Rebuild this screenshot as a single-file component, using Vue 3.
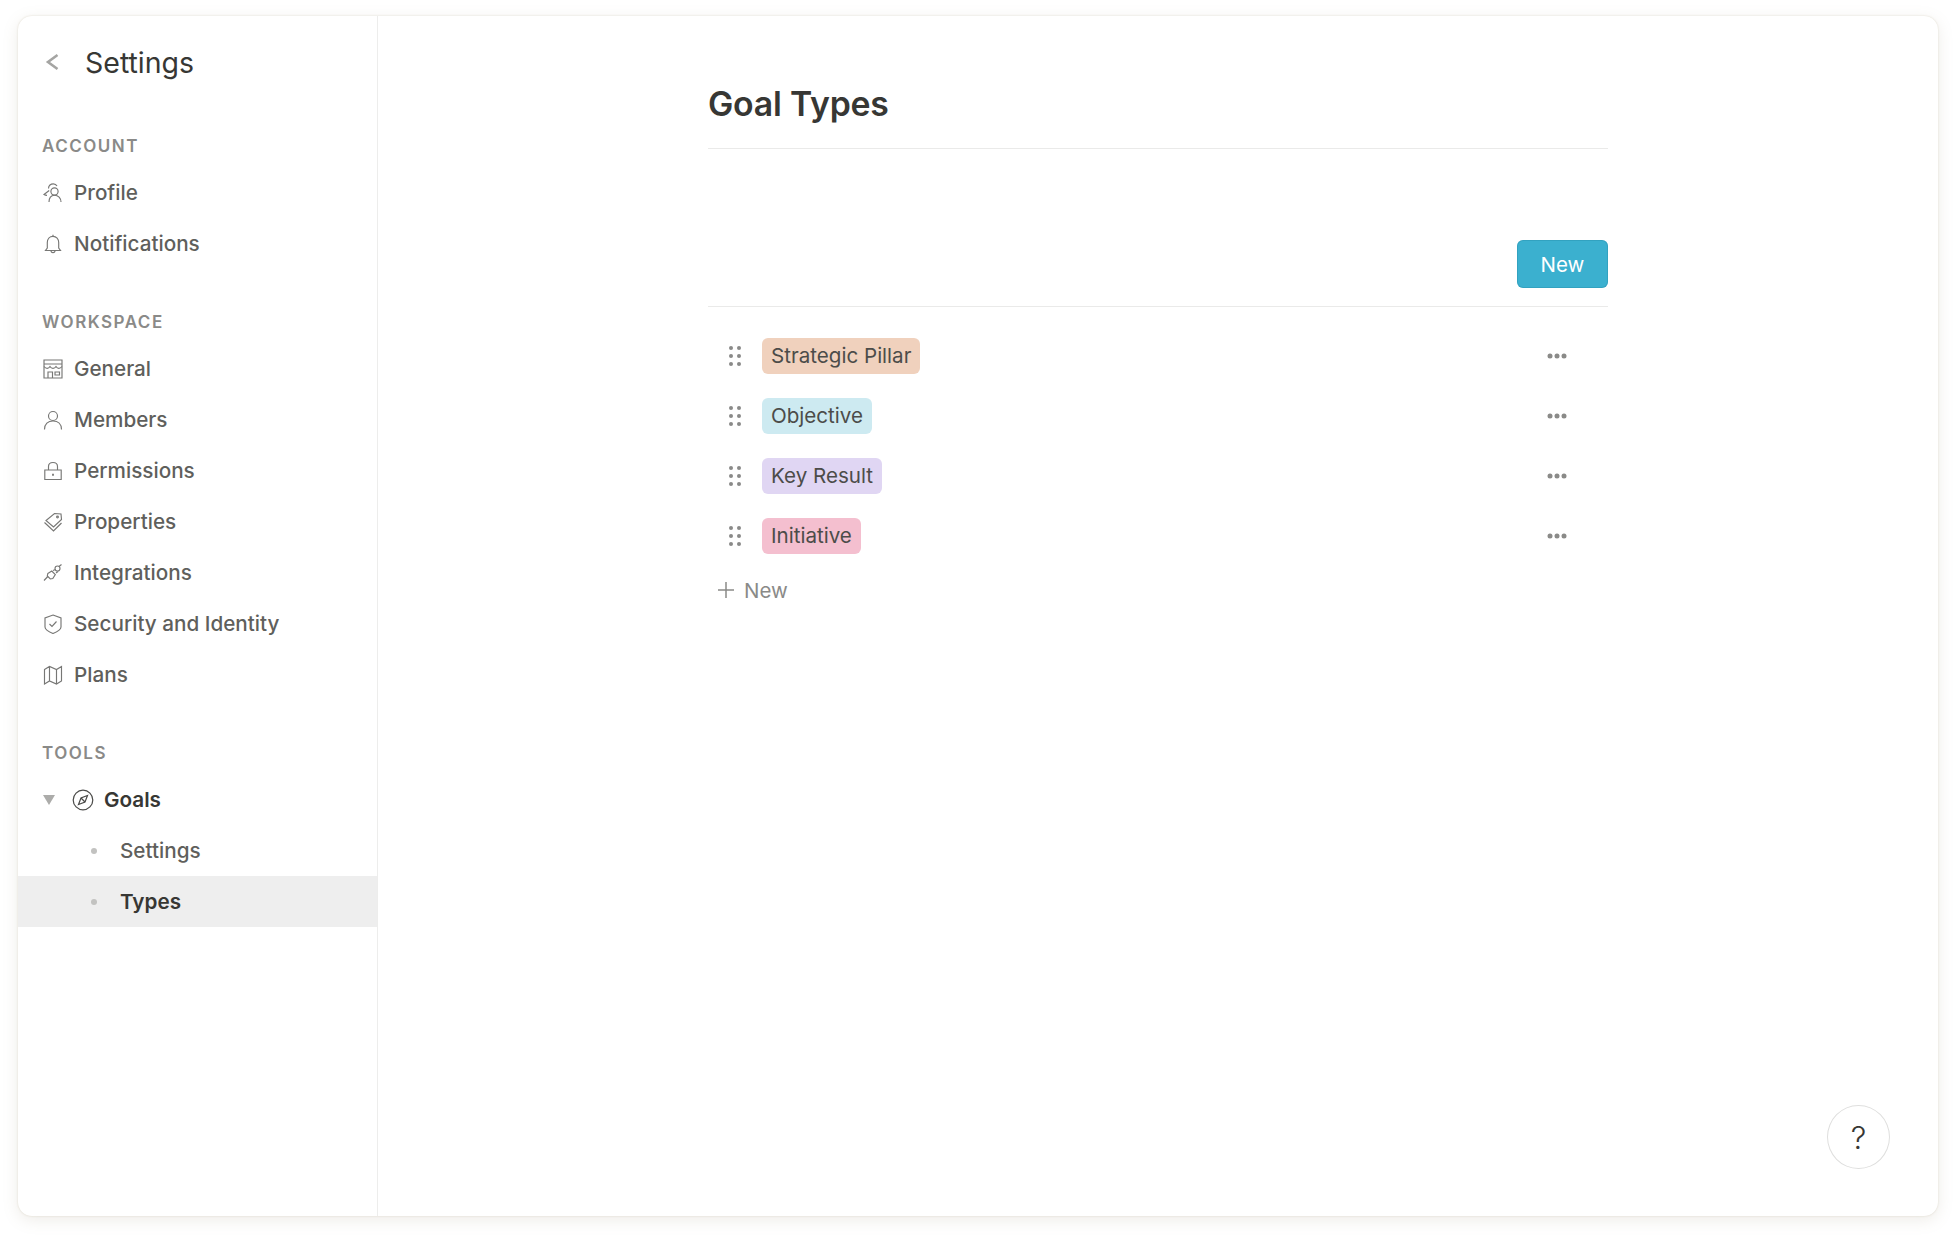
<script setup>
const sections = [
  { title: 'ACCOUNT', items: [
    { label: 'Profile', icon: 'profile' },
    { label: 'Notifications', icon: 'bell' },
  ]},
  { title: 'WORKSPACE', items: [
    { label: 'General', icon: 'store' },
    { label: 'Members', icon: 'user' },
    { label: 'Permissions', icon: 'lock' },
    { label: 'Properties', icon: 'tag' },
    { label: 'Integrations', icon: 'plug' },
    { label: 'Security and Identity', icon: 'shield' },
    { label: 'Plans', icon: 'map' },
  ]},
]
const types = [
  { label: 'Strategic Pillar', color: '#f0d1bd' },
  { label: 'Objective', color: '#cdeaf1' },
  { label: 'Key Result', color: '#e0d6f3' },
  { label: 'Initiative', color: '#f4bfcf' },
]
</script>

<template>
  <div class="page">
    <div class="window">
      <aside class="sidebar">
        <div class="head">
          <svg class="back" width="14" height="18" viewBox="0 0 14 18"><path d="M12.500 2 3 9l9.500 7" fill="none" stroke="#a5a5a3" stroke-width="2.600"/></svg>
          <span class="head-title">Settings</span>
        </div>
        <section v-for="s in sections" :key="s.title" class="group">
          <div class="group-title">{{ s.title }}</div>
          <div v-for="it in s.items" :key="it.label" class="row">
            <svg class="ico" width="20" height="20" viewBox="0 0 20 20" fill="none" stroke="#777775" stroke-width="1.150">
              <template v-if="it.icon === 'profile'">
                <circle cx="11.500" cy="8.500" r="3.600"/><path d="M6 19c0-4 1.800-6.800 5.500-6.800S18 15 18 19"/><path d="M5.500 5.500C5.500 2.500 7.800.8 10.300.8c1.700 0 3 .8 3.700 2.200M6.200 7.500 1 11.500c1 .6 2 .8 3 .8"/>
              </template>
              <template v-else-if="it.icon === 'bell'">
                <path d="M2.500 16.500h15l-1.800-2.500V8.500c0-3.600-2.300-6.200-5.700-6.200S4.300 4.900 4.300 8.500V14z"/><path d="M8 16.500c0 2.800 4 2.800 4 0M10 .8v1.500"/>
              </template>
              <template v-else-if="it.icon === 'store'">
                <path d="M1 1h18v18H1zM1 5h18"/><path d="M1 7.500c2 2.500 4.500 2.500 6 0 1.500 2.500 4.500 2.500 6 0 1.500 2.500 4 2.500 6 0"/><path d="M5 19v-6h4.500v6M12 13h4.500v3H12z"/>
              </template>
              <template v-else-if="it.icon === 'user'">
                <circle cx="10" cy="6" r="4.500"/><path d="M1.500 19.500c0-5.500 3.500-8.500 8.500-8.500s8.500 3 8.500 8.500"/>
              </template>
              <template v-else-if="it.icon === 'lock'">
                <path d="M5.500 9V5.500C5.500 3 7.300 1.500 10 1.500s4.500 1.500 4.500 4V9"/><path d="M1.800 9h16.400v9.500H1.800z"/><path d="M10 12.800v2" stroke-width="1.800"/>
              </template>
              <template v-else-if="it.icon === 'tag'">
                <path d="M11.500 1.500l6.500.5.500 5.500-8 7.500-7.500-6.500z"/><circle cx="14.500" cy="5" r=".9"/><path d="M1.500 10.500 10.500 19 18.500 11"/>
              </template>
              <template v-else-if="it.icon === 'plug'">
                <path d="M4.800 10.500 8.800 8l3.500 3.500-2.500 4-2.500.5-3-3z"/><circle cx="14.500" cy="5.500" r="2.500"/><path d="M4.800 13.500 1 17.500M10 7.500l2.500-1M13 10l2-1.500M16 3.500 18.500 1.500"/>
              </template>
              <template v-else-if="it.icon === 'shield'">
                <path d="M10 1 18 4v9c0 2.500-3 4.500-8 6.500C5 17.500 2 15.500 2 13V4z"/><path d="M6.500 10l2.500 2.500 4.500-5"/>
              </template>
              <template v-else>
                <path d="M1.500 4.500 6.500 1.500l7 3 5-3v14.500l-5 3-7-3-5 3zM6.500 1.500V16M13.500 4.500V19"/>
              </template>
            </svg>
            <span>{{ it.label }}</span>
          </div>
        </section>
        <section class="group">
          <div class="group-title">TOOLS</div>
          <div class="row goals">
            <span class="caret"></span>
            <svg width="22" height="22" viewBox="0 0 22 22" fill="none" stroke="#4a4a48" stroke-width="1.200"><circle cx="11" cy="11" r="9.800"/><path d="M15.500 6.500 13 13 6.500 15.500 9 9z"/><path d="M9 9 13 13"/></svg>
            <span>Goals</span>
          </div>
          <div class="row sub"><i class="dot"></i><span>Settings</span></div>
          <div class="row sub active"><i class="dot"></i><span>Types</span></div>
        </section>
      </aside>
      <main class="main">
        <div class="content">
          <h1>Goal Types</h1>
          <div class="toolbar"><button class="new-btn">New</button></div>
          <div class="list">
            <div v-for="t in types" :key="t.label" class="type-row">
              <svg class="grip" width="14" height="22" viewBox="0 0 14 22" fill="#8a8a88">
                <circle cx="3" cy="3" r="2"/><circle cx="11" cy="3" r="2"/><circle cx="3" cy="11" r="2"/><circle cx="11" cy="11" r="2"/><circle cx="3" cy="19" r="2"/><circle cx="11" cy="19" r="2"/>
              </svg>
              <span class="tag" :style="{ background: t.color }">{{ t.label }}</span>
              <svg class="more" width="20" height="6" viewBox="0 0 20 6" fill="#8a8a88"><circle cx="3" cy="3" r="2.500"/><circle cx="10" cy="3" r="2.500"/><circle cx="17" cy="3" r="2.500"/></svg>
            </div>
            <div class="add">
              <svg width="18" height="18" viewBox="0 0 18 18"><path d="M9 1v16M1 9h16" stroke="#8a8a88" stroke-width="1.500"/></svg>
              <span>New</span>
            </div>
          </div>
        </div>
        <button class="help">?</button>
      </main>
    </div>
  </div>
</template>

<style>
html, body { margin: 0; background: #fff; }
</style>

<style scoped>
.page {
  width: 1956px;
  height: 1236px;
  padding: 16px 18px 20px;
  box-sizing: border-box;
  font-family: Inter, "Liberation Sans", sans-serif;
}
.window {
  height: 100%;
  display: flex;
  background: #fff;
  border-radius: 14px;
  box-shadow: 0 0 2px rgba(190, 180, 150, .45), 0 4px 16px rgba(140, 130, 100, .15);
  overflow: hidden;
}
.sidebar {
  width: 360px;
  box-sizing: border-box;
  flex: none;
  border-right: 1px solid #ededec;
}
.head {
  display: flex;
  align-items: center;
  height: 92px;
  padding-left: 27px;
  box-sizing: border-box;
}
.back { flex: none; }
.head-title {
  margin-left: 26px;
  font-size: 28.500px;
  color: #373734;
}
.group { margin-bottom: 40px; }
.group-title {
  height: 26px;
  line-height: 26px;
  margin-bottom: 8px;
  padding-left: 24px;
  font-size: 17px;
  font-weight: 600;
  letter-spacing: 1.500px;
  color: #8a8a88;
}
.head + .group { margin-top: 25px; }
.row {
  height: 51px;
  display: flex;
  align-items: center;
  padding-left: 24.500px;
  font-size: 20.700px;
  font-weight: 500;
  color: #5f5f5c;
}
.ico { flex: none; margin-right: 11.500px; }
.goals { color: #373734; font-weight: 600; padding-left: 25px; }
.caret {
  width: 0;
  height: 0;
  border-left: 6px solid transparent;
  border-right: 6px solid transparent;
  border-top: 10px solid #acacaa;
  margin-right: 17px;
}
.goals svg { margin-right: 10px; }
.sub { padding-left: 73px; }
.dot {
  width: 6px;
  height: 6px;
  border-radius: 50%;
  background: #c2c2c0;
  margin-right: 23px;
}
.active { background: #eeeeee; color: #373734; font-weight: 600; }
.main { flex: 1; position: relative; }
.content {
  width: 900px;
  margin-left: 330px;
}
h1 {
  margin: 0;
  height: 133px;
  padding-top: 64px;
  box-sizing: border-box;
  line-height: 48px;
  font-size: 33.800px;
  font-weight: 600;
  letter-spacing: -0.200px;
  color: #373734;
  border-bottom: 1px solid #eaeae9;
}
.toolbar {
  height: 158px;
  box-sizing: border-box;
  display: flex;
  justify-content: flex-end;
  padding-top: 91px;
  border-bottom: 1px solid #eaeae9;
}
.new-btn {
  width: 91px;
  height: 48px;
  border: none;
  border-radius: 6px;
  background: #3bb0cf;
  box-shadow: inset 0 0 0 1px rgba(30, 130, 160, .3);
  color: #fff;
  font: 400 20.500px Inter, sans-serif;
}
.list { padding-top: 19px; }
.type-row {
  height: 60px;
  display: flex;
  align-items: center;
  padding-left: 20px;
  padding-right: 41px;
}
.grip { flex: none; margin-right: 20px; }
.tag {
  height: 36px;
  line-height: 36px;
  padding: 0 9px;
  border-radius: 6px;
  font-size: 20.600px;
  color: #4c4c49;
}
.more { margin-left: auto; }
.add {
  display: flex;
  align-items: center;
  gap: 9px;
  height: 48px;
  padding-left: 9px;
  color: #8a8a88;
  font-size: 20.500px;
}
.help {
  position: absolute;
  right: 48px;
  bottom: 47px;
  width: 63px;
  height: 64px;
  border-radius: 50%;
  border: 1px solid #dfdfde;
  background: #fff;
  color: #373734;
  font: 300 31px Inter, sans-serif;
  padding: 0;
}
</style>
